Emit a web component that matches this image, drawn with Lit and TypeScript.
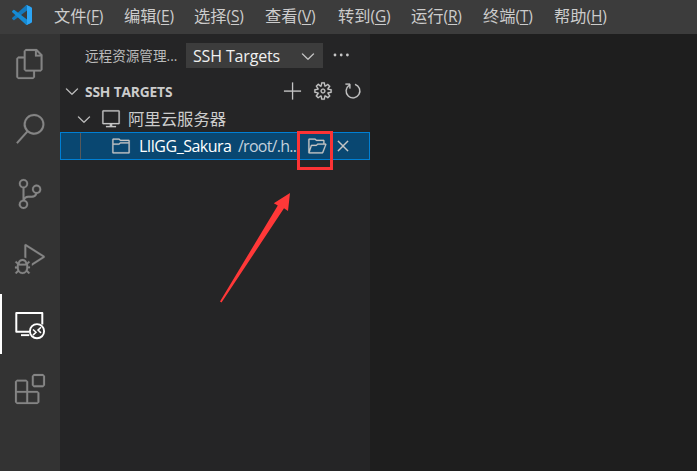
import { LitElement, html, css, svg } from "lit";
import { customElement, property } from "lit/decorators.js";

const PATHS: Record<string, string> = {
  files: "M17.5 0h-9L7 1.5V6H2.5L1 7.5v15.07L2.5 24h12.07L16 22.57V18h4.7l1.3-1.43V4.5L17.5 0zm0 2.12l2.38 2.38H17.5V2.12zm-3 20.38h-12v-15H7v9.07L8.5 18h6v4.5zm6-6h-12v-15H16V6h4.5v10.5z",
  search: "M15.25 0a8.25 8.25 0 0 0-6.18 13.72L1 22.88l1.12 1 8.05-9.12A8.251 8.251 0 1 0 15.25.01V0zm0 15a6.75 6.75 0 1 1 0-13.5 6.75 6.75 0 0 1 0 13.5z",
  scm: "M21.007 8.222A3.738 3.738 0 0 0 15.045 5.2a3.737 3.737 0 0 0 1.156 6.583 2.988 2.988 0 0 1-2.668 1.67h-2.99a4.456 4.456 0 0 0-2.989 1.165V7.4a3.737 3.737 0 1 0-1.494 0v9.117a3.776 3.776 0 1 0 1.816.099 2.99 2.99 0 0 1 2.668-1.667h2.99a4.484 4.484 0 0 0 4.223-3.039 3.736 3.736 0 0 0 3.25-3.687zM4.565 3.738a2.242 2.242 0 1 1 4.484 0 2.242 2.242 0 0 1-4.484 0zm4.484 16.441a2.242 2.242 0 1 1-4.484 0 2.242 2.242 0 0 1 4.484 0zm8.221-9.715a2.242 2.242 0 1 1 0-4.485 2.242 2.242 0 0 1 0 4.485z",
  debug: "M10.94 13.5l-1.32 1.32a3.73 3.73 0 0 0-7.24 0L1.06 13.5 0 14.56l1.72 1.72-.22.22V18H0v1.5h1.5v.08c.077.489.214.966.41 1.42L0 22.94 1.06 24l1.65-1.65A4.308 4.308 0 0 0 6 24a4.31 4.31 0 0 0 3.29-1.65L10.94 24 12 22.94 10.09 21c.198-.464.336-.951.41-1.45v-.1H12V18h-1.5v-1.5l-.22-.22L12 14.56l-1.06-1.06zM6 13.5a2.25 2.25 0 0 1 2.25 2.25h-4.5A2.25 2.25 0 0 1 6 13.5zm3 6a3.33 3.33 0 0 1-3 3 3.33 3.33 0 0 1-3-3v-2.25h6v2.25zm14.76-9.9v1.26L13.5 17.37V15.6l8.5-5.37L9 2v9.46a5.07 5.07 0 0 0-1.5-.72V.63L8.64 0l15.12 9.6z",
  extensions: "M13.5 1.5L15 0h7.5L24 1.5V9l-1.5 1.5H15L13.5 9V1.5zm1.5 0V9h7.5V1.5H15zM0 15V6l1.5-1.5H9L10.5 6v7.5H18l1.5 1.5v7.5L18 24H1.5L0 22.5V15zm9-1.5V6H1.5v7.5H9zM9 15H1.5v7.5H9V15zm1.5 7.5H18V15h-7.5v7.5z",
  gear: "M9.1 4.4L8.6 2H7.4l-.5 2.4-.7.3-2-1.3-.9.8 1.3 2-.2.7-2.4.5v1.2l2.4.5.3.8-1.3 2 .8.8 2-1.3.8.3.4 2.3h1.2l.5-2.4.8-.3 2 1.3.8-.8-1.3-2 .3-.8 2.3-.4V7.4l-2.4-.5-.3-.8 1.3-2-.8-.8-2 1.3-.7-.2zM9.4 1l.5 2.4L12 2.1l2 2-1.4 2.1 2.4.4v2.8l-2.4.5L14 12l-2 2-2.1-1.4-.5 2.4H6.6l-.5-2.4L4 13.9l-2-2 1.4-2.1L1 9.4V6.6l2.4-.5L2.1 4l2-2 2.1 1.4.4-2.4h2.8zm.6 7c0 1.1-.9 2-2 2s-2-.9-2-2 .9-2 2-2 2 .9 2 2zM8 9c.6 0 1-.4 1-1s-.4-1-1-1-1 .4-1 1 .4 1 1 1z",
  refresh: "M4.681 3H2V2h3.5l.5.5V6H5V4a5 5 0 1 0 4.53-.761l.302-.954A6 6 0 1 1 4.681 3z",
  add: "M7.2 1.2h.9v6.4h6.3v.9H8.1v6.3h-.9V8.5H.8v-.9h6.400z",
  chevron: "M7.976 10.072l4.357-4.357.62.618L8.284 11h-.618L3 6.333l.619-.618 4.357 4.357z",
  close: "M8 8.707l3.646 3.647.708-.707L8.707 8l3.647-3.646-.707-.708L8 7.293 4.354 3.646l-.707.708L7.293 8l-3.646 3.646.707.708L8 8.707z",
  vm: "M14.5 1h-13l-.5.5v10.2l.5.5H7v1.3H4v1h8v-1H9v-1.3h5.5l.5-.5V1.5l-.5-.5zM14 11.2H2V2h12v9.2z",
  folder: "M14.5 3H7.71l-.85-.85L6.51 2h-5l-.5.5v11l.5.5h13l.5-.5v-10L14.5 3zm-.51 8.49V13h-12V7h4.49l.35-.15.86-.86H14v1.5l-.01 4zm0-6.49h-6.5l-.35.15-.86.86H2v-3h4.29l.85.85.36.15H14l-.01.99z",
  folderOpen: "M1.5 14h11l.48-.37 2.63-7-.48-.63H14V3.5l-.5-.5H7.71l-.86-.85L6.5 2h-5l-.5.5v11l.5.5zM2 3h4.29l.86.85.35.15H13v2H8.5l-.35.15-.86.85H3.5l-.47.34-1 3.08L2 3zm10.13 10H2.19l1.67-5H7.5l.35-.15.86-.85h5.79l-2.37 6z",
};

@customElement("code-icon")
class CodeIcon extends LitElement {
  @property() name = "";
  @property({ type: Number }) grid = 16;
  static styles = css`
    :host { display: block; width: 20px; height: 20px; flex: none; }
    svg { display: block; width: 100%; height: 100%; fill: currentColor; overflow: visible; }
    .glyph { stroke: currentColor; stroke-width: 0.15px; }
  `;
  render() {
    if (this.name === "remote") {
      return html`<svg viewBox="0 0 30 30">${svg`
        <path d="M14.5 22.8H1.3V4H27.3V15.500" fill="none" stroke="currentColor" stroke-width="2" stroke-linejoin="round"/>
        <path d="M6 25.200h8.300v1.900H6z"/>
        <circle cx="22" cy="22.200" r="7.100" fill="none" stroke="currentColor" stroke-width="1.900"/>
        <path d="M18 20.500l3 2.800-3 2.800M26 18.300l-3 2.800 3 2.800" fill="none" stroke="currentColor" stroke-width="1.500"/>`}</svg>`;
    }
    if (this.name === "more") {
      return html`<svg viewBox="0 0 20 20">${svg`
        <circle cx="3" cy="9" r="1.400"/><circle cx="9.200" cy="9" r="1.400"/><circle cx="15.400" cy="9" r="1.400"/>`}</svg>`;
    }
    return html`<svg viewBox="0 0 ${this.grid} ${this.grid}"><path class="glyph" d=${PATHS[this.name]}></path></svg>`;
  }
}

const MENU = [
  ["文件", "F"], ["编辑", "E"], ["选择", "S"], ["查看", "V"],
  ["转到", "G"], ["运行", "R"], ["终端", "T"], ["帮助", "H"],
];
const ACTIVITIES = ["files", "search", "scm", "debug", "remote", "extensions"];

@customElement("app-root")
class AppRoot extends LitElement {
  static styles = css`
    :host {
      display: flex; flex-direction: column; position: relative;
      width: 697px; height: 471px; overflow: hidden;
      background: #1e1e1e; color: #ccc;
      font: 16px/20px "Open Sans", "Noto Sans CJK SC", sans-serif;
    }
    .title { flex: none; display: flex; align-items: center; height: 34px; background: #3c3c3c; }
    .logo { width: 20px; height: 20px; margin: 0 22px 4px 12px; flex: none; }
    .menu { display: grid; grid-template-columns: 70px 70px 71px 73px 73px 72px 71px 70px; font-size: 16.25px; }
    .entry { white-space: nowrap; padding-bottom: 3px; }
    .key { font-size: 15.5px; letter-spacing: -0.15px; }
    .key u { text-underline-offset: 2px; text-decoration-thickness: 1px; }
    .work { flex: 1; display: flex; min-height: 0; }
    .activity { width: 60px; flex: none; background: #333; display: flex; flex-direction: column; gap: 5px; }
    .item { height: 60px; display: flex; align-items: center; justify-content: center; color: #858585; box-sizing: border-box; }
    .item.active { color: #fff; border-left: 2px solid #fff; padding-right: 2px; }
    .item code-icon { width: 30px; height: 30px; }
    .side { width: 310px; flex: none; background: #252526; }
    .head { display: flex; align-items: center; height: 43px; }
    .caption { width: 101px; padding-left: 25px; font-size: 13.6px; color: #bbb; white-space: nowrap; }
    .select { width: 137px; height: 25px; box-sizing: border-box; background: #3c3c3c; color: #f0f0f0; display: flex; align-items: center; justify-content: space-between; padding: 0 5px 0 7px; letter-spacing: -0.15px; }
    .select code-icon { color: #ccc; }
    .more { margin-left: 9px; color: #c5c5c5; }
    .section { height: 28px; display: flex; align-items: center; padding: 0 7px 0 2px; color: #c5c5c5; }
    .section b { flex: 1; margin: 2px 0 0 3px; font-size: 13.75px; letter-spacing: -0.15px; color: #ccc; }
    .tools { display: flex; gap: 10px; }
    .row { height: 27px; display: flex; align-items: center; white-space: nowrap; box-sizing: border-box; color: #c5c5c5; }
    .host { padding-left: 14px; }
    .host code-icon:nth-child(2) { margin: 0 7px; }
    .host span { color: #ccc; font-size: 16.35px; }
    .picked { height: 28px; border: 1px solid #007fd4; background: #094771; }
    .guide { width: 1px; height: 100%; background: #585858; margin-left: 19px; }
    .picked .folder { margin: 0 8px 0 30px; }
    .name { color: #fff; width: 99px; letter-spacing: -0.5px; }
    .path { width: 69px; color: #c3d0dc; letter-spacing: -0.75px; }
    .picked .close { margin-left: 6px; }
    .frame { position: absolute; left: 297px; top: 131px; width: 36px; height: 39px; border: 3px solid #fb3335; box-sizing: border-box; }
    .arrow { position: absolute; left: 218px; top: 190px; width: 76px; height: 116px; }
  `;

  render() {
    return html`
      <header class="title">
        <svg class="logo" viewBox="0 0 100 100">
          <path fill="#1479bd" d="M96.5 10.7L75.9.8a6.2 6.2 0 0 0-7.1 1.2L1.3 63.6a4.2 4.2 0 0 0 0 6.1l5.5 5a4.2 4.2 0 0 0 5.4.2L93.4 13.3z"/>
          <path fill="#168bd4" d="M96.5 89.3L75.9 99.2a6.2 6.2 0 0 1-7.1-1.2L1.3 36.4a4.2 4.2 0 0 1 0-6.1l5.5-5a4.2 4.2 0 0 1 5.4-.2L93.4 86.7z"/>
          <path fill="#2ca5f5" d="M75.9 99.1a6.2 6.2 0 0 1-7.1-1.2c2.3 2.3 6.2.7 6.2-2.6V4.7c0-3.3-3.9-4.9-6.2-2.6a6.2 6.2 0 0 1 7.1-1.2l20.6 9.9A6.3 6.3 0 0 1 100 16.4v67.2a6.3 6.3 0 0 1-3.5 5.7z"/>
        </svg>
        <nav class="menu">
          ${MENU.map(([label, key]) => html`<span class="entry">${label}<span class="key">(<u>${key}</u>)</span></span>`)}
        </nav>
      </header>
      <main class="work">
        <aside class="activity">
          ${ACTIVITIES.map((name) => html`<div class="item ${name === "remote" ? "active" : ""}"><code-icon name=${name} grid="24"></code-icon></div>`)}
        </aside>
        <section class="side">
          <div class="head">
            <span class="caption">远程资源管理...</span>
            <div class="select"><span>SSH Targets</span><code-icon name="chevron"></code-icon></div>
            <code-icon class="more" name="more"></code-icon>
          </div>
          <div class="section">
            <code-icon name="chevron"></code-icon>
            <b>SSH TARGETS</b>
            <div class="tools">
              <code-icon name="add"></code-icon>
              <code-icon name="gear"></code-icon>
              <code-icon name="refresh"></code-icon>
            </div>
          </div>
          <div class="row host">
            <code-icon name="chevron"></code-icon>
            <code-icon name="vm"></code-icon>
            <span>阿里云服务器</span>
          </div>
          <div class="row picked">
            <i class="guide"></i>
            <code-icon class="folder" name="folder"></code-icon>
            <span class="name">LIlGG_Sakura</span>
            <span class="path">/root/.h...</span>
            <code-icon name="folderOpen"></code-icon>
            <code-icon class="close" name="close"></code-icon>
          </div>
        </section>
      </main>
      <div class="frame"></div>
      <svg class="arrow" viewBox="218 190 76 116">
        <path fill="#ff3838" d="M290 193L273.8 203.2 277.8 205.5 220 301.5 221.5 302.5 284 208.3 288 211z"/>
      </svg>
    `;
  }
}
